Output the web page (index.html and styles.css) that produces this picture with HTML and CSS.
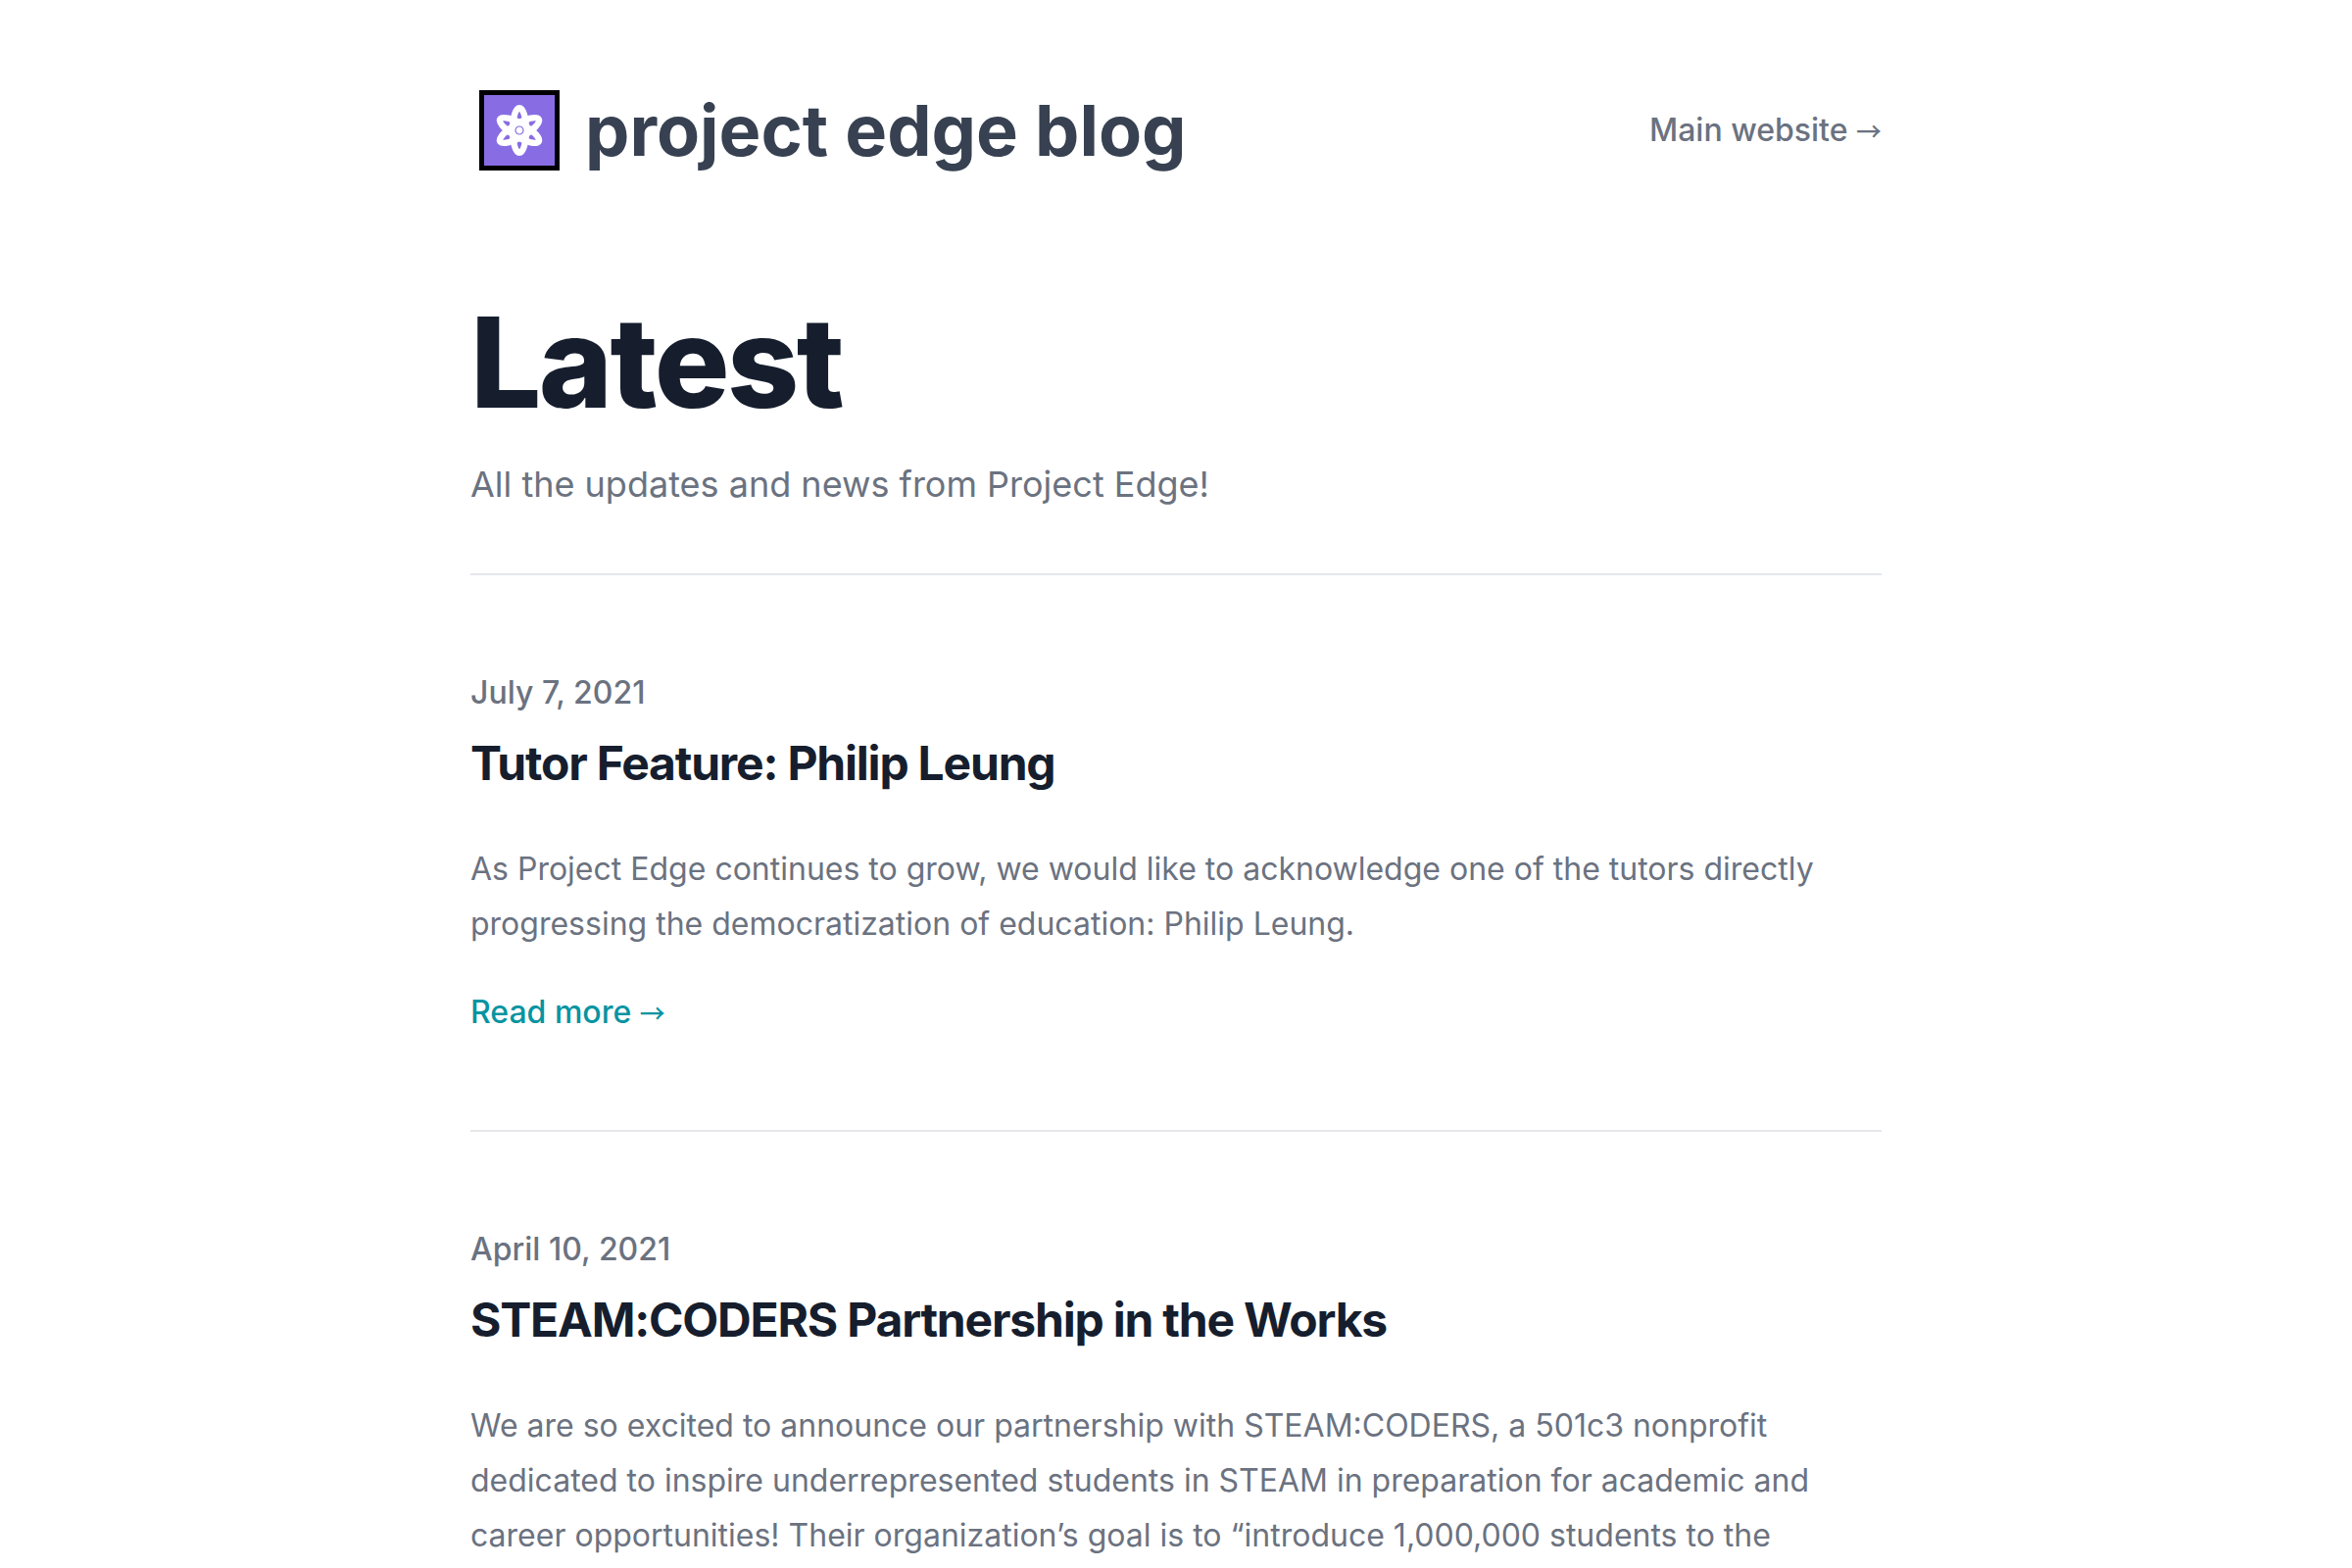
FILE: index.html
```html
<!DOCTYPE html>
<html lang="en">
<head>
<meta charset="utf-8">
<meta name="viewport" content="width=device-width, initial-scale=1">
<title>project edge blog</title>
<link rel="stylesheet" href="styles.css">
</head>
<body>
<div class="container">
  <header class="site-header">
    <a class="brand" href="#">
      <svg class="brand-logo" viewBox="0 0 82 82" aria-hidden="true">
        <rect width="82" height="82" fill="#000"/>
        <rect x="5" y="5" width="72" height="72" fill="#886ce4"/>
        <g transform="translate(41 41)" fill="none" stroke="#fff" stroke-width="6.4">
          <ellipse rx="7" ry="22.8"/>
          <ellipse rx="7" ry="22.8" transform="rotate(60)"/>
          <ellipse rx="7" ry="22.8" transform="rotate(120)"/>
          <circle r="10" fill="#fff" stroke="none"/>
          <circle r="4" stroke="#886ce4" stroke-width="1.2"/>
        </g>
      </svg>
      <span class="brand-name">project edge blog</span>
    </a>
    <a class="site-link" href="#">Main website <span class="arrow">→</span></a>
  </header>
  <main>
    <div class="intro">
      <h1 class="page-title">Latest</h1>
      <p class="lead">All the updates and news from Project Edge!</p>
    </div>
    <ul class="posts">
      <li class="post">
        <time class="post-date" datetime="2021-07-07">July 7, 2021</time>
        <h2 class="post-title"><a href="#">Tutor Feature: Philip Leung</a></h2>
        <p class="post-text">As Project Edge continues to grow, we would like to acknowledge one of the tutors directly progressing the democratization of education: Philip Leung.</p>
        <a class="read-more" href="#">Read more <span class="arrow">→</span></a>
      </li>
      <li class="post">
        <time class="post-date" datetime="2021-04-10">April 10, 2021</time>
        <h2 class="post-title"><a href="#">STEAM:CODERS Partnership in the Works</a></h2>
        <p class="post-text">We are so excited to announce our partnership with STEAM:CODERS, a 501c3 nonprofit dedicated to inspire underrepresented students in STEAM in preparation for academic and career opportunities! Their organization’s goal is to “introduce 1,000,000 students to the</p>
      </li>
    </ul>
  </main>
</div>
</body>
</html>
```
FILE: styles.css
```css
*, *::before, *::after { box-sizing: border-box; }
body {
  margin: 0;
  background: #fff;
  color: #6b7280;
  font-family: Inter, "Liberation Sans", sans-serif;
  font-size: 32px;
  line-height: 48px;
  font-optical-sizing: none;
}
h1, h2, p, ul { margin: 0; padding: 0; }
ul { list-style: none; }
a { color: inherit; text-decoration: none; }
.container {
  width: 92%;
  max-width: 1440px;
  margin: 0 auto;
}
.site-header {
  display: flex;
  justify-content: space-between;
  align-items: center;
  padding: 80px 0;
}
.brand {
  display: flex;
  align-items: center;
  gap: 26px;
  min-height: 106px;
  padding-left: 9px;
}
.brand-logo { width: 82px; height: 82px; flex: none; }
.brand-name {
  color: #374151;
  font-size: 72px;
  font-weight: 700;
  line-height: 80px;
}
.site-link { font-weight: 500; }
.arrow {
  font-family: "Noto Sans CJK JP", sans-serif;
  font-size: 26px;
  line-height: 1;
}
.intro {
  display: flex;
  flex-direction: column;
  gap: 40px;
  padding: 48px 0 63px;
}
.page-title {
  color: #161e2e;
  font-size: 128px;
  font-weight: 800;
  line-height: 112px;
  letter-spacing: -0.02em;
}
.lead { font-size: 36px; line-height: 56px; }
.post {
  display: flex;
  flex-direction: column;
  align-items: flex-start;
  padding: 96px 0;
  border-top: 2px solid #e5e7eb;
}
.post:last-child { padding-bottom: 0; }
.post-date { font-weight: 500; }
.post-title {
  margin: 16px 0 48px;
  color: #161e2e;
  font-size: 48px;
  font-weight: 700;
  line-height: 64px;
  letter-spacing: -0.025em;
}
.post-text { line-height: 56px; }
.read-more {
  margin-top: 38px;
  color: #0694a2;
  font-weight: 500;
}
```
